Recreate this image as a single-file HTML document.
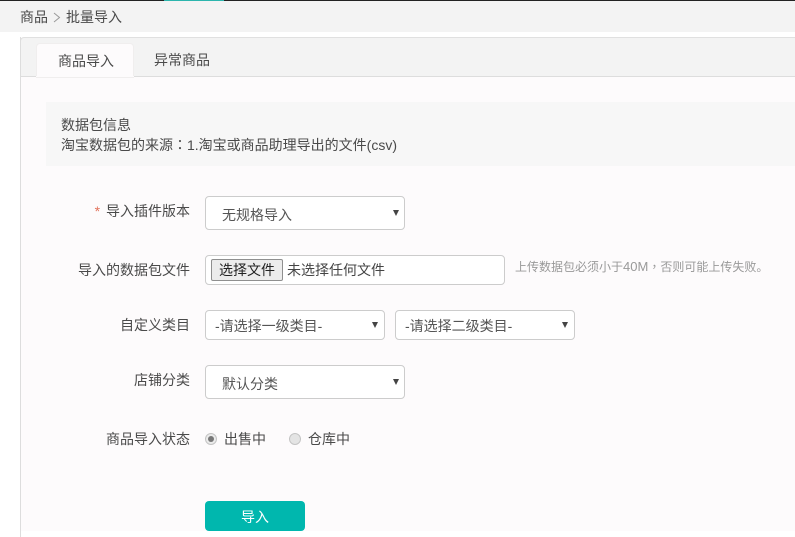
<!DOCTYPE html>
<html><head><meta charset="utf-8"><style>
html,body{margin:0;padding:0;background:#fff}
body{width:795px;height:537px;position:relative;overflow:hidden;font-family:"Liberation Sans","Noto Sans CJK SC",sans-serif;font-size:14px;color:#4a4a4a}
div,span{position:absolute;box-sizing:border-box;white-space:nowrap}
.t{line-height:20px}
.l{right:605px;text-align:right;line-height:20px}
.sel{background:#fff;border:1px solid #ccc;border-radius:4px;left:205px;color:#555}
.arr{width:0;height:0;border-left:3px solid transparent;border-right:3px solid transparent;border-top:6px solid #444}
.p{position:static;font-family:"Noto Sans CJK TC",sans-serif}
</style></head><body>
<div style="left:0;top:0;width:795px;height:1px;background:#222"></div>
<div style="left:164px;top:0;width:60px;height:1px;background:#2cb5ad"></div>
<div style="left:0;top:1px;width:795px;height:31px;background:#f3f3f3"></div>
<div class="t" style="left:20px;top:7px">商品</div>
<svg style="position:absolute;left:53px;top:12px" width="8" height="11"><path d="M1 1L6.5 5.5L1 10" fill="none" stroke="#999" stroke-width="1"/></svg>
<div class="t" style="left:66px;top:7px">批量导入</div>

<div style="left:20px;top:37px;width:775px;height:500px;border-left:1px solid #ddd"></div>
<div style="left:21px;top:38px;width:774px;height:493px;background:#fdfbfc"></div>
<div style="left:20px;top:37px;width:775px;height:40px;background:#f3f3f3;border-top:1px solid #e0e0e0;border-left:1px solid #ddd;border-bottom:1px solid #ddd;border-top-left-radius:4px"></div>
<div style="left:37px;top:44px;width:96px;height:33px;background:#fdfbfc;border-radius:3px 3px 0 0;box-shadow:0 0 0 1px #f0eeee"></div>
<div style="left:36px;top:76px;width:98px;height:1px;background:#fdfbfc"></div>
<div class="t" style="left:58px;top:51px">商品导入</div>
<div class="t" style="left:154px;top:50px">异常商品</div>

<div style="left:46px;top:102px;width:749px;height:64px;background:#f7f7f7"></div>
<div class="t" style="left:61px;top:115px">数据包信息</div>
<div class="t" style="left:61px;top:135px">淘宝数据包的来源<span class="p">：</span>1.淘宝或商品助理导出的文件(csv)</div>

<div class="l" style="top:201px"><span style="position:static;color:#e2725b;margin-right:2px">*</span>&nbsp;导入插件版本</div>
<div class="sel" style="top:196px;width:200px;height:34px"></div>
<div class="t" style="left:222px;top:205px;color:#555">无规格导入</div>
<div class="arr" style="left:393px;top:210px"></div>

<div class="l" style="top:260px">导入的数据包文件</div>
<div class="sel" style="top:255px;width:300px;height:30px"></div>
<div style="left:211px;top:259px;width:72px;height:22px;background:#ececec;border:1px solid #8f8f8f;border-radius:2px;text-align:center;line-height:20px;font-size:14px;color:#222">选择文件</div>
<div class="t" style="left:287px;top:260px;color:#444">未选择任何文件</div>
<div class="t" style="left:515px;top:257px;font-size:12px;color:#999">上传数据包必须小于<span style="position:static;font-size:13px">40M</span><span class="p">，</span>否则可能上传失败。</div>

<div class="l" style="top:315px">自定义类目</div>
<div class="sel" style="top:310px;width:180px;height:30px"></div>
<div class="t" style="left:215px;top:316px;color:#555">-请选择一级类目-</div>
<div class="arr" style="left:372px;top:322px"></div>
<div class="sel" style="left:395px;top:310px;width:180px;height:30px"></div>
<div class="t" style="left:405px;top:316px;color:#555">-请选择二级类目-</div>
<div class="arr" style="left:562px;top:322px"></div>

<div class="l" style="top:370px">店铺分类</div>
<div class="sel" style="top:365px;width:200px;height:34px"></div>
<div class="t" style="left:222px;top:374px;color:#555">默认分类</div>
<div class="arr" style="left:393px;top:379px"></div>

<div class="l" style="top:429px">商品导入状态</div>
<div style="left:205px;top:433px;width:12px;height:12px;border-radius:50%;background:#ebebeb;border:1px solid #c4c4c4"></div>
<div style="left:208px;top:436px;width:6px;height:6px;border-radius:50%;background:#777"></div>
<div class="t" style="left:224px;top:429px">出售中</div>
<div style="left:289px;top:433px;width:12px;height:12px;border-radius:50%;background:#e4e4e4;border:1px solid #c4c4c4"></div>
<div class="t" style="left:308px;top:429px">仓库中</div>

<div style="left:205px;top:501px;width:100px;height:30px;background:#00b7ae;border-radius:4px;color:#fff;text-align:center;line-height:32px">导入</div>
</body></html>
